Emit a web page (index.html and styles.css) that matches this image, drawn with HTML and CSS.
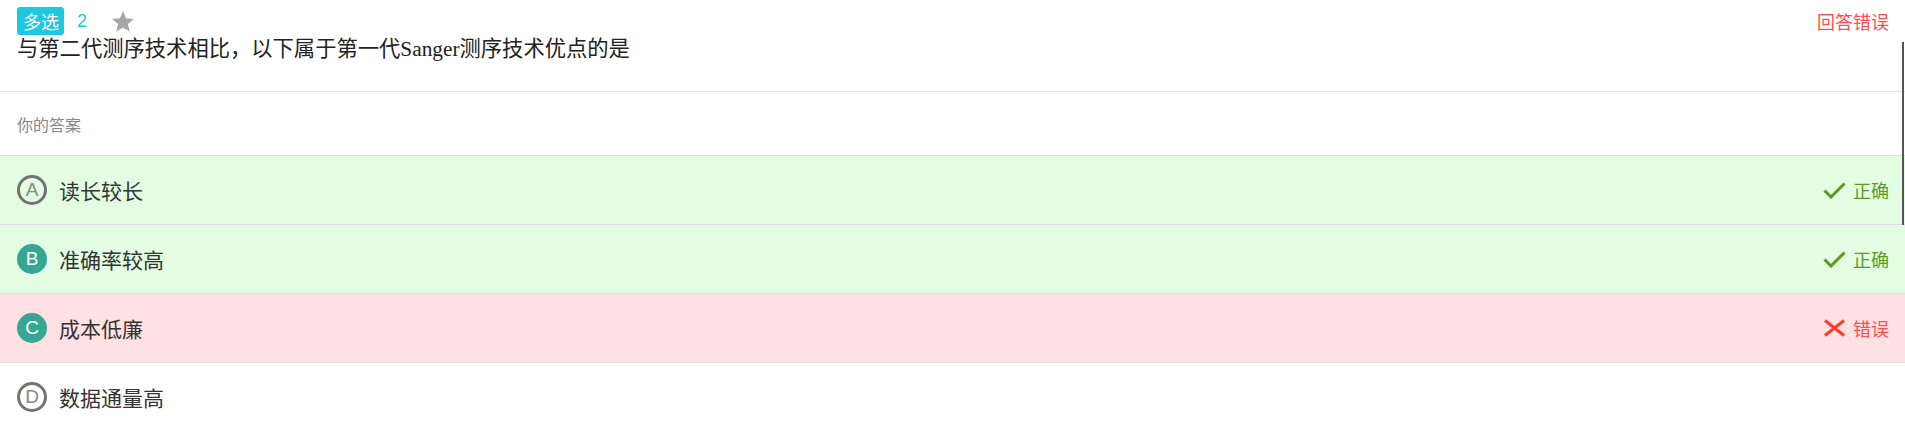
FILE: index.html
```html
<!DOCTYPE html>
<html lang="zh-CN">
<head>
<meta charset="utf-8">
<title>多选题</title>
<link rel="stylesheet" href="styles.css">
</head>
<body>
<div class="page">
  <div class="edge-line"></div>
  <header class="q-head">
    <div class="q-top">
      <div class="q-meta">
        <span class="q-badge">多选</span>
        <span class="q-num">2</span>
        <svg class="q-star" viewBox="0 0 24 23" width="22" height="21"><path d="M12 0L15.29 8.07L23.98 8.71L17.33 14.33L19.41 22.79L12 18.2L4.59 22.79L6.67 14.33L0.02 8.71L8.71 8.07Z" fill="#a6a6a6"/></svg>
      </div>
      <span class="q-result">回答错误</span>
    </div>
    <div class="q-text">与第二代测序技术相比，以下属于第一代Sanger测序技术优点的是</div>
  </header>
  <div class="answer-label">你的答案</div>
  <ul class="options">
    <li class="opt opt-right">
      <span class="opt-key key-outline">A</span>
      <span class="opt-text">读长较长</span>
      <span class="opt-status status-right">
        <svg viewBox="0 0 23 17" width="23" height="17"><polyline points="1.5,8.5 8,15 21.5,1.5" fill="none" stroke="#5a9b1f" stroke-width="3"/></svg>
        正确
      </span>
    </li>
    <li class="opt opt-right">
      <span class="opt-key key-fill">B</span>
      <span class="opt-text">准确率较高</span>
      <span class="opt-status status-right">
        <svg viewBox="0 0 23 17" width="23" height="17"><polyline points="1.5,8.5 8,15 21.5,1.5" fill="none" stroke="#5a9b1f" stroke-width="3"/></svg>
        正确
      </span>
    </li>
    <li class="opt opt-wrong">
      <span class="opt-key key-fill">C</span>
      <span class="opt-text">成本低廉</span>
      <span class="opt-status status-wrong">
        <svg viewBox="0 0 23 18" width="23" height="18"><path d="M2 1.5L21 16.5M21 1.5L2 16.5" fill="none" stroke="#ff3b30" stroke-width="3"/></svg>
        错误
      </span>
    </li>
    <li class="opt">
      <span class="opt-key key-outline">D</span>
      <span class="opt-text">数据通量高</span>
    </li>
  </ul>
</div>
</body>
</html>
```
FILE: styles.css
```css
html, body {
  margin: 0;
  padding: 0;
  background: #fff;
}
body {
  font-family: "Liberation Sans", "Noto Sans CJK SC", sans-serif;
  color: #333;
}
.page {
  position: relative;
}
.edge-line {
  position: absolute;
  right: 1px;
  top: 42px;
  width: 2px;
  height: 183px;
  background: #555;
}
.q-head {
  padding: 7px 16px 28px 17px;
  border-bottom: 1px solid #e0e0e0;
}
.q-top {
  display: flex;
  align-items: center;
  justify-content: space-between;
  height: 28px;
}
.q-meta {
  display: flex;
  align-items: center;
}
.q-badge {
  display: inline-block;
  height: 28px;
  line-height: 28px;
  padding: 0 5px 0 6px;
  background: #1ec8e1;
  color: #fff;
  font-size: 18px;
  border-radius: 3px;
  font-family: "Noto Sans CJK SC", sans-serif;
}
.q-num {
  margin-left: 13px;
  color: #1ec8e1;
  font-size: 18px;
  line-height: 28px;
}
.q-star {
  margin-left: 25px;
  display: block;
}
.q-result {
  color: #ff4d4f;
  font-size: 18px;
  line-height: 28px;
  font-family: "Noto Sans CJK SC", sans-serif;
}
.q-text {
  font-family: "Liberation Serif", "Noto Sans CJK SC", serif;
  font-size: 21.3px;
  line-height: 28px;
  color: #222;
}
.answer-label {
  height: 63px;
  display: flex;
  align-items: center;
  padding-left: 17px;
  font-size: 16px;
  color: #888;
  font-family: "Noto Sans CJK SC", sans-serif;
}
.options {
  list-style: none;
  margin: 0;
  padding: 0;
}
.opt {
  display: flex;
  align-items: center;
  height: 68px;
  padding: 0 16px 0 17px;
  border-top: 1px solid #ddd;
}
.opt-right {
  background: #e3fde3;
}
.opt-wrong {
  background: #ffe1e3;
}
.opt-key {
  box-sizing: border-box;
  width: 30px;
  height: 30px;
  border-radius: 50%;
  display: flex;
  align-items: center;
  justify-content: center;
  font-size: 19px;
  flex: none;
}
.key-outline {
  border: 3px solid #737373;
  color: #888;
}
.key-fill {
  background: #35a792;
  color: #fff;
}
.opt-text {
  margin-left: 12px;
  font-size: 21px;
  color: #333;
  font-family: "Noto Sans CJK SC", sans-serif;
}
.opt-status {
  margin-left: auto;
  display: flex;
  align-items: center;
  gap: 7px;
  font-size: 18px;
  font-family: "Noto Sans CJK SC", sans-serif;
}
.opt-status svg {
  display: block;
}
.status-right {
  color: #5a9b1f;
}
.status-wrong {
  color: #ff4d4f;
}
```
